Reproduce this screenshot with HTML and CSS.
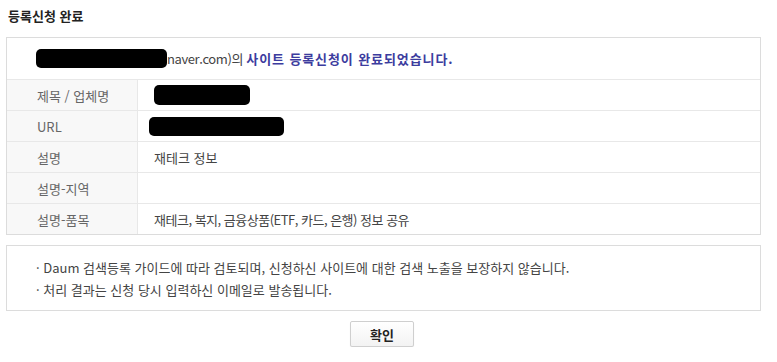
FILE: index.html
```html
<!DOCTYPE html>
<html lang="ko">
<head>
<meta charset="utf-8">
<title>등록신청 완료</title>
<link rel="stylesheet" href="styles.css">
</head>
<body>
<div class="page">
  <h2 class="title">등록신청 완료</h2>
  <div class="result">
    <div class="result-head">
      <span class="redact redact-head"></span><span class="site">naver.com)의 </span><strong class="done">사이트 등록신청이 완료되었습니다.</strong>
    </div>
    <div class="row">
      <div class="label">제목 / 업체명</div>
      <div class="value"><span class="redact redact-name"></span></div>
    </div>
    <div class="row">
      <div class="label">URL</div>
      <div class="value value-url"><span class="redact redact-url"></span></div>
    </div>
    <div class="row">
      <div class="label">설명</div>
      <div class="value">재테크 정보</div>
    </div>
    <div class="row">
      <div class="label">설명-지역</div>
      <div class="value"></div>
    </div>
    <div class="row row-last">
      <div class="label">설명-품목</div>
      <div class="value value-tight">재테크, 복지, 금융상품(ETF, 카드, 은행) 정보 공유</div>
    </div>
  </div>
  <ul class="notice">
    <li>· Daum 검색등록 가이드에 따라 검토되며, 신청하신 사이트에 대한 검색 노출을 보장하지 않습니다.</li>
    <li>· 처리 결과는 신청 당시 입력하신 이메일로 발송됩니다.</li>
  </ul>
  <div class="actions">
    <button class="btn" type="button">확인</button>
  </div>
</div>
</body>
</html>
```
FILE: styles.css
```css
* { box-sizing: border-box; }
html, body { margin: 0; padding: 0; background: #fff; }
body {
  font-family: "Noto Sans CJK KR", "Noto Sans", "Liberation Sans", sans-serif;
  font-size: 13px;
  color: #333;
}
.page {
  width: 755px;
  margin-left: 6px;
}
.title {
  margin: 0;
  padding: 6px 2px 0;
  height: 37px;
  line-height: 19px;
  font-size: 13px;
  font-weight: bold;
  color: #222;
}
.result {
  border: 1px solid #dcdcdc;
}
.result-head {
  height: 42px;
  padding-left: 29px;
  display: flex;
  align-items: center;
  border-bottom: 1px solid #e8e8e8;
  color: #444;
  white-space: pre;
}
.site { letter-spacing: -0.4px; }
.done {
  color: #3c3c9e;
  font-weight: bold;
  letter-spacing: 0.9px;
}
.redact {
  display: inline-block;
  background: #000;
  border-radius: 5px;
}
.redact-head { width: 131px; height: 19px; }
.redact-name { width: 96px; height: 20px; }
.redact-url { width: 135px; height: 19px; }
.row {
  display: grid;
  grid-template-columns: 131px 1fr;
  height: 31px;
  border-bottom: 1px solid #e8e8e8;
}
.row-last { height: 30px; border-bottom: 0; }
.label {
  background: #f8f8f8;
  border-right: 1px solid #e8e8e8;
  padding-left: 30px;
  display: flex;
  align-items: center;
  color: #666;
}
.value {
  padding-left: 16px;
  display: flex;
  align-items: center;
  color: #444;
}
.value-url { padding-left: 11px; }
.value-tight { letter-spacing: -0.5px; }
.notice {
  list-style: none;
  margin: 10px 0 0;
  padding: 11px 0 9px 29px;
  border: 1px solid #dcdcdc;
  color: #444;
}
.notice li {
  line-height: 22px;
}
.actions {
  display: flex;
  justify-content: center;
  padding-top: 10px;
  padding-right: 3px;
}
.btn {
  width: 64px;
  height: 26px;
  border: 1px solid #cfcfcf;
  border-radius: 2px;
  background: linear-gradient(#ffffff, #f3f3f3);
  box-shadow: 0 1px 1px rgba(0,0,0,0.08);
  font-family: inherit;
  font-size: 13px;
  font-weight: bold;
  color: #222;
  padding: 0;
}
```
